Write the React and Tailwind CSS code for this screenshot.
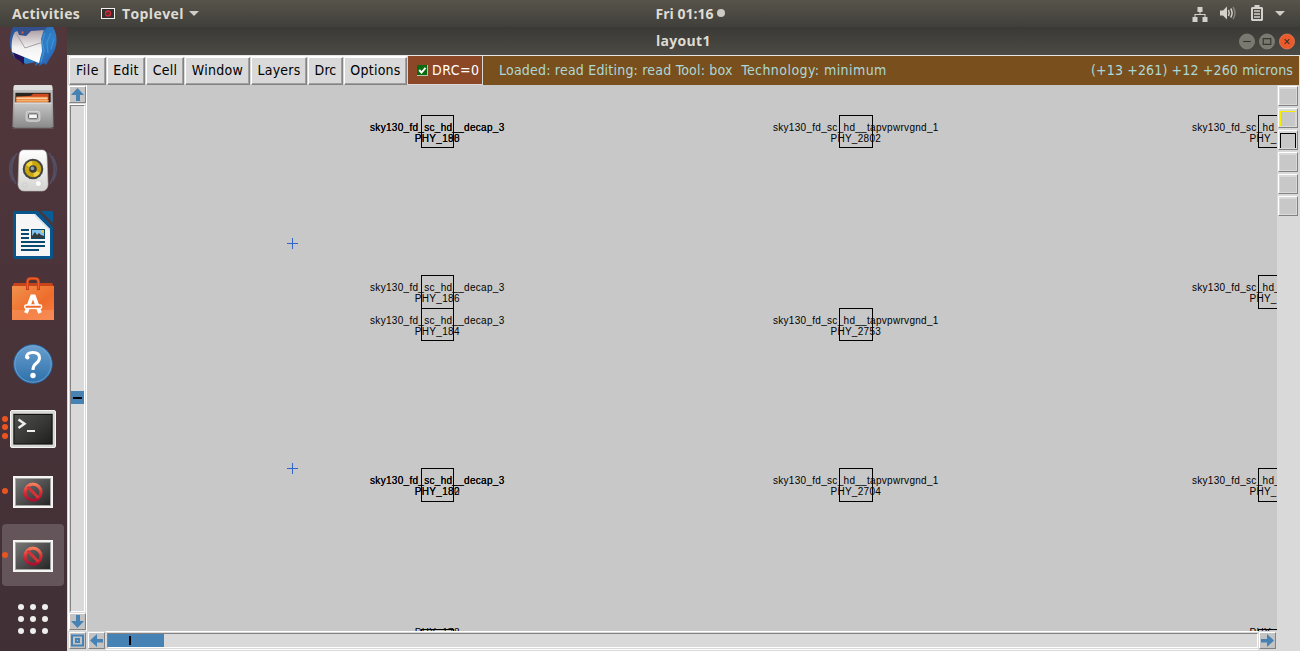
import React from "react";

const ui = "font-['DejaVu_Sans_Condensed','DejaVu_Sans',sans-serif]";
const head = "font-['Open_Sans','Noto_Sans',sans-serif]";

function Stop() {
  return (
    <svg className="mt-[2px]" width="40" height="32" viewBox="0 0 40 32">
      <defs>
        <linearGradient id="scr" x1="0" y1="0" x2="1" y2="1">
          <stop offset="0" stopColor="#777" />
          <stop offset="1" stopColor="#262626" />
        </linearGradient>
        <linearGradient id="red" x1="0" y1="0" x2="0" y2="1">
          <stop offset="0" stopColor="#f47b5c" />
          <stop offset=".5" stopColor="#da3034" />
          <stop offset="1" stopColor="#a81030" />
        </linearGradient>
      </defs>
      <rect width="40" height="32" fill="#f4f4f3" />
      <rect x="2" y="2" width="36" height="28" fill="#a5a5a3" />
      <rect x="3" y="3" width="34" height="26" fill="url(#scr)" />
      <circle cx="20" cy="16.2" r="8" fill="none" stroke="url(#red)" strokeWidth="3.2" />
      <path d="M14.5 10.7 25.5 21.7" stroke="#d93236" strokeWidth="3" />
    </svg>
  );
}

function Thunderbird() {
  return (
    <svg width="48" height="40" viewBox="0 0 48 40">
      <defs>
        <linearGradient id="tb" x1="0" y1="0" x2="1" y2="1">
          <stop offset="0" stopColor="#284f91" />
          <stop offset=".6" stopColor="#2f80c9" />
          <stop offset="1" stopColor="#2458ab" />
        </linearGradient>
        <linearGradient id="env" x1="0" y1="0" x2="0" y2="1">
          <stop offset="0" stopColor="#a99aa0" />
          <stop offset=".55" stopColor="#f3f2f3" />
          <stop offset="1" stopColor="#fff" />
        </linearGradient>
      </defs>
      <path d="M4 0H44C50 10 48 23 41 31L37 38 35 36 30 39 31 36 26 39 27 35 17 37 11 33 6 31C0 24-1 10 4 0Z" fill="url(#tb)" />
      <path d="M4 25 15 30 15 38 11 34 6 31Z" fill="#24135b" />
      <path d="M6 5 14 2H35L32 12 33 24 30 36 3 25C2 17 3 9 6 5Z" fill="url(#env)" />
      <path d="M7 6 16 21 34 15" fill="none" stroke="#a5a0a2" strokeWidth="1" />
      <path d="M7 0 10 8 17 9 22 4 36 3 38 0Z" fill="#34508b" />
      <circle cx="13.500" cy="5.500" r="1.200" fill="#cb5448" />
      <path d="M36 6 33 15 35 24 32 35M42 6 38 15 39 26M45 12 42 22" fill="none" stroke="#3f93cf" strokeWidth="1.200" />
    </svg>
  );
}

function Files() {
  return (
    <svg width="44" height="44" viewBox="0 0 44 45">
      <defs>
        <linearGradient id="cab" x1="0" y1="0" x2="0" y2="1">
          <stop offset="0" stopColor="#c7c7c7" />
          <stop offset="1" stopColor="#898989" />
        </linearGradient>
      </defs>
      <path d="M2 2Q2 0 5 0H39Q42 0 42 2L43 43H1Z" fill="url(#cab)" />
      <path d="M3 0H41L42 5H2Z" fill="#dedede" />
      <rect x="4" y="8" width="36" height="12" fill="#29241f" />
      <path d="M5 12 20 11 22 9H38V18H5Z" fill="#cf4a1e" />
      <path d="M5 12H37V18H5Z" fill="#ed8941" />
      <path d="M5 13.5H37" stroke="#fff2da" />
      <path d="M5 16H38" stroke="#f3b876" />
      <rect x="3" y="18" width="38" height="26" fill="url(#cab)" />
      <path d="M3 18.5H41" stroke="#e3e3e3" />
      <path d="M1 44H43" stroke="#716a6c" />
      <rect x="15" y="27" width="14" height="10" rx="2" fill="#bcbcbc" stroke="#d8d8d8" />
      <rect x="17.5" y="29.5" width="9" height="5" rx="1" fill="#f5f5f5" stroke="#555" />
    </svg>
  );
}

function Speaker() {
  return (
    <svg width="50" height="44" viewBox="0 0 50 44">
      <g fill="none" stroke="#5b6488" strokeWidth="1.8" opacity=".5">
        <path d="M9 4Q-1 19 8 35M6 7Q-2 19 5 32M41 4Q51 19 42 35M44 7Q52 19 45 32" />
      </g>
      <defs>
        <linearGradient id="spk" x1="0" y1="0" x2="0" y2="1">
          <stop offset="0" stopColor="#fff" />
          <stop offset="1" stopColor="#d3d3d0" />
        </linearGradient>
      </defs>
      <path d="M15 1H35Q39 2 39 8L40 36Q39 42 34 42H16Q11 42 10 36L11 8Q11 2 15 1Z" fill="url(#spk)" stroke="#bbb" strokeWidth=".6" />
      <circle cx="25" cy="20" r="10.3" fill="#454545" />
      <circle cx="25" cy="20" r="8.2" fill="#c9a60e" />
      <path d="M25 20 18 16A8 8 0 0 1 24 12ZM25 20 32 24A8 8 0 0 1 26 28Z" fill="#eed244" />
      <circle cx="25" cy="20" r="3.8" fill="#3c3d40" />
      <circle cx="24.4" cy="19.4" r="1.8" fill="#969eaa" />
      <circle cx="31" cy="35" r="3.4" fill="#d4d4d1" />
      <circle cx="30.4" cy="34.5" r="2.5" fill="#fafafa" />
      <rect x="15" y="34" width="4" height="4" rx="1" fill="none" stroke="#ccc" strokeWidth=".7" />
    </svg>
  );
}

function Writer() {
  return (
    <svg width="40" height="48" viewBox="0 0 40 48">
      <path d="M2 0H25L40 16V46Q40 48 38 48H2Q0 48 0 46V2Q0 0 2 0Z" fill="#08558c" />
      <path d="M28 0H39Q40 0 40 1V12Z" fill="#0a5c94" />
      <path d="M3 3H22L37 18V45H3Z" fill="#f6f6f6" />
      <path d="M22 3 37 18V20L21 4Z" fill="#cde" />
      <path d="M8 19H16M8 23H16M8 27H16M8 31H32M8 35H32M8 39H26" stroke="#08496f" strokeWidth="2" />
      <rect x="18" y="18" width="14" height="10" fill="#08496f" />
      <rect x="19" y="19" width="12" height="8" fill="#83c2ee" />
      <path d="M19 27V25L22 21 24 24 26 22 28 24 31 25V27Z" fill="#343b3e" />
      <circle cx="29.5" cy="20.5" r="1.4" fill="#e8cd4d" />
    </svg>
  );
}

function Software() {
  return (
    <svg className="-mt-px" width="42" height="43" viewBox="0 0 42 43">
      <defs>
        <linearGradient id="bag" x1="0" y1="0" x2="1" y2="1">
          <stop offset="0" stopColor="#f0914d" />
          <stop offset=".6" stopColor="#ef6c2b" />
          <stop offset="1" stopColor="#f58248" />
        </linearGradient>
      </defs>
      <path d="M2 6H40L42 10H0Z" fill="#c7441a" />
      <rect y="9" width="42" height="34" fill="url(#bag)" />
      <rect y="33" width="42" height="10" fill="#f9935d" opacity=".6" />
      <path d="M15.500 13V5Q15.500 1.500 19 1.500H23Q26.500 1.500 26.500 5V13" fill="none" stroke="#c53b14" strokeWidth="3" />
      <path d="M15.500 12V5Q15.500 1.500 19 1.500H23Q26.500 1.500 26.500 5V12" fill="none" stroke="#e8622d" strokeWidth="1.500" />
      <path d="M14 36 20 19.500H22L28 36" fill="none" stroke="#fff" strokeWidth="3.800" />
      <rect x="12.700" y="28" width="17" height="3.400" rx="1.700" fill="#ee6a2a" stroke="#fff" strokeWidth="1.500" />
    </svg>
  );
}

function Help() {
  return (
    <svg className="mt-[2px]" width="42" height="42" viewBox="0 0 42 42">
      <defs>
        <linearGradient id="hp" x1="0" y1="0" x2="0" y2="1">
          <stop offset="0" stopColor="#699fcf" />
          <stop offset="1" stopColor="#2d70aa" />
        </linearGradient>
      </defs>
      <circle cx="21" cy="21" r="19.300" fill="url(#hp)" stroke="#2861a0" strokeWidth="1" />
      <circle cx="21" cy="21" r="18.200" fill="none" stroke="#74a8d4" strokeWidth=".8" />
      <path d="M14.500 15Q14 9.500 21 9.500Q27.500 9.500 27.500 15Q27.500 18 24 20.500Q21 22.700 21 27" fill="none" stroke="#fff" strokeWidth="3" />
      <circle cx="15.500" cy="14.500" r="2" fill="#fff" />
      <circle cx="21" cy="32.500" r="2.700" fill="#fff" />
    </svg>
  );
}

function Terminal() {
  return (
    <svg className="mt-[4px]" width="46" height="38" viewBox="0 0 46 38">
      <defs>
        <linearGradient id="tm" x1="0" y1="0" x2="1" y2="1">
          <stop offset="0" stopColor="#4f4f4d" />
          <stop offset=".6" stopColor="#343433" />
          <stop offset="1" stopColor="#1d1d1d" />
        </linearGradient>
      </defs>
      <rect x=".5" y=".5" width="45" height="37" rx="1.500" fill="#d7d7d5" stroke="#f3f3f2" />
      <rect x="3" y="3.500" width="40" height="31" fill="#8c8c8a" />
      <rect x="4" y="4.500" width="38" height="29.500" fill="url(#tm)" stroke="#111" />
      <path d="M8.500 9.500 14.500 13.700 8.500 18" fill="none" stroke="#eee" strokeWidth="2.400" />
      <path d="M17 21H25" stroke="#eee" strokeWidth="2" />
    </svg>
  );
}

function Grid() {
  return (
    <svg width="32" height="32" viewBox="0 0 32 32" fill="#eeeeec">
      {[4, 16, 28].map((y) => [4, 16, 28].map((x) => <circle key={x + "-" + y} cx={x} cy={y} r="3" />))}
    </svg>
  );
}

function Slot({ children, dots = 0, active, className }) {
  return (
    <div className={`relative flex h-[62px] w-[62px] shrink-0 items-center justify-center rounded-[4px] ${active ? "bg-[#64555b]" : ""} ${className || ""}`}>
      {children}
      {dots > 0 && (
        <div className="absolute top-0 left-0 flex h-full w-[6px] flex-col items-center justify-center gap-[2.500px]">
          {Array.from({ length: dots }, (_, i) => (
            <i key={i} className="block size-[6px] rounded-full bg-[#e95420]" />
          ))}
        </div>
      )}
    </div>
  );
}

function Dock() {
  return (
    <div className="flex h-[624px] w-[67px] shrink-0 flex-col items-start overflow-hidden bg-linear-to-b from-[#51373c] to-[#403036] pl-[2px]">
      <div className="flex h-[49px] w-[62px] shrink-0 justify-center">
        <Thunderbird />
      </div>
      <Slot><Files /></Slot>
      <Slot className="mt-[2px]"><Speaker /></Slot>
      <Slot className="mt-[2px]"><Writer /></Slot>
      <Slot className="mt-[2px]"><Software /></Slot>
      <Slot className="mt-[2px]"><Help /></Slot>
      <Slot className="mt-[2px]" dots={3}><Terminal /></Slot>
      <Slot className="mt-[2px]" dots={1}><Stop /></Slot>
      <Slot className="mt-[2px]" dots={1} active><Stop /></Slot>
      <Slot className="mt-[2px]"><Grid /></Slot>
    </div>
  );
}

function TopBar() {
  return (
    <div className={`grid h-[27px] grid-cols-[1fr_auto_1fr] items-center bg-linear-to-b from-[#57544b] to-[#403f3a] text-[14px] font-bold text-[#dfdbd2] ${head}`}>
      <div className="flex items-center pl-[12px]">
        <span className="w-[89px] tracking-[0.3px]">Activities</span>
        <svg width="14" height="11" viewBox="0 0 14 11">
          <rect x=".5" y=".5" width="13" height="10" fill="#33302f" stroke="#f1f1ef" />
          <circle cx="7" cy="5.500" r="2.500" fill="none" stroke="#d62c3a" strokeWidth="1.300" />
          <path d="M5.300 3.800 8.700 7.200" stroke="#d62c3a" />
        </svg>
        <span className="ml-[7px] w-[67px] tracking-[0.4px]">Toplevel</span>
        <svg width="10" height="5"><path d="M0 0H10L5 5Z" fill="#d0cdc6" /></svg>
      </div>
      <div className="flex items-center gap-[3px] pl-[80px]">
        <span className="-mt-px w-[58px] whitespace-nowrap">Fri 01:16</span>
        <i className="-mt-px block size-[8px] rounded-full bg-[#cccac5]" />
      </div>
      <div className="flex items-center justify-end pr-[15px] text-[#d3d1cc]">
        <svg width="16" height="16" viewBox="0 0 16 16" fill="#d3d1cc">
          <path d="M5.500 1H10.500V6H8.500V8H13.500V11H15.500V16H10.500V11H12.500V9H3.500V11H5.500V16H.5V11H2.500V8H7.500V6H5.500Z" />
        </svg>
        <svg className="-mt-px ml-[12px]" width="17" height="14" viewBox="0 0 17 14">
          <path d="M0 4.500H3L7 .5V13.500L3 9.500H0Z" fill="#d3d1cc" />
          <path d="M8.500 4Q10 7 8.500 10M10.700 2.500Q13.500 7 10.700 11.500" fill="none" stroke="#d3d1cc" strokeWidth="1.500" />
          <path d="M13 1Q17 7 13 13" fill="none" stroke="#85827c" strokeWidth="1.500" />
        </svg>
        <svg className="-mt-px ml-[14px]" width="12" height="16" viewBox="0 0 12 16">
          <path d="M3.500 0H8.500V2H11L12 3V15L11 16H1L0 15V3L1 2H3.500ZM2 4V14H10V4Z" fill="#d3d1cc" fillRule="evenodd" />
          <path d="M3 6H9M3 9H9M3 12H9" stroke="#d3d1cc" strokeWidth="1.700" />
        </svg>
        <svg className="ml-[12px]" width="10" height="5"><path d="M0 0H10L5 5Z" fill="#d0cdc6" /></svg>
      </div>
    </div>
  );
}

function TitleBar() {
  return (
    <div className={`grid h-[28px] shrink-0 grid-cols-[1fr_auto_1fr] items-center bg-linear-to-b from-[#3a3935] to-[#4b4a44] text-[14px] font-bold text-[#dfdbd2] ${head}`}>
      <span />
      <span className="-mt-[2px] w-[55px] whitespace-nowrap tracking-[0.3px]">layout1</span>
      <div className="flex justify-end gap-[4px] pr-[5px]">
        {["M4.500 8.500H12.500", "M4.500 5.500H12.500V11.500H4.500Z", "M6 6 11 11M11 6 6 11"].map((d, i) => (
          <svg key={d} width="16" height="17" viewBox="0 0 17 17">
            <circle cx="8.500" cy="8.500" r="8" fill={i === 2 ? "#ec5a2c" : "#797871"} stroke={i === 2 ? "#f08461" : "#8b8982"} strokeWidth=".7" />
            <path d={d} fill="none" stroke="#39352f" strokeWidth="1.200" />
          </svg>
        ))}
      </div>
    </div>
  );
}

const menus = [
  ["File", "w-[37px] tracking-[0.5px]"],
  ["Edit", "w-[38px] tracking-[0.3px]"],
  ["Cell", "w-[38px] tracking-[0.3px]"],
  ["Window", "w-[65px] tracking-[0.3px]"],
  ["Layers", "w-[56px] tracking-[0.2px]"],
  ["Drc", "w-[35px] tracking-[0.1px]"],
  ["Options", "w-[63px] tracking-[0.25px]"],
];

function MenuBar() {
  return (
    <div className={`flex h-[30px] shrink-0 border-t border-[#e6e6e6] bg-[#d9d9d9] pl-[2px] text-[14px] text-black ${ui}`}>
      <div className="flex gap-px border-t border-white">
        {menus.map(([t, w]) => (
          <div key={t} className={`flex items-center justify-center border border-t-white border-r-[#828282] border-b-[#828282] border-l-white pb-[2px] shadow-[inset_-1px_-1px_#a0a0a0] ${w}`}>
            {t}
          </div>
        ))}
      </div>
      <div className="ml-px flex w-[75px] items-center gap-[4px] border-r border-b border-[#d9d9d9] bg-[#8b4726] pl-[9px] text-white">
        <svg className="shrink-0" width="11" height="11" viewBox="0 0 11 11">
          <rect width="11" height="11" fill="#b0c8a8" />
          <path d="M0 0H10V10H0Z" fill="#0a6c10" />
          <path d="M2.200 5 4.500 7.500 8.500 2.800" fill="none" stroke="#fff" strokeWidth="1.900" />
        </svg>
        <span className="tracking-[0.5px] whitespace-nowrap">DRC=0</span>
      </div>
      <div className="mr-px flex flex-1 items-center justify-between bg-[#79501d] pr-[6px] pl-[16px] whitespace-pre text-[#add8d8]">
        <span className="tracking-[0.21px]">
          {"Loaded: read Editing: read Tool: box  "}
          <span className="tracking-[0.44px]">Technology: minimum</span>
        </span>
        <span className="tracking-[0.15px]">(+13 +261) +12 +260 microns</span>
      </div>
    </div>
  );
}

const arrows = {
  up: "M6.500 0 13 7H9V13H5V7H0Z",
  down: "M5 0H9V6H13L6.500 13 0 6H5Z",
  left: "M0 6.500 7 0V5H13V8.500H7V13Z",
  right: "M13 6.500 6 0V5H0V8.500H6V13Z",
};

function ArrowButton({ dir }) {
  return (
    <div className="flex size-[17px] shrink-0 items-center justify-center border border-t-white border-r-[#828282] border-b-[#828282] border-l-white bg-[#c3c3c3]">
      <svg width="13" height="13" viewBox="0 0 13 13">
        {dir ? (
          <path d={arrows[dir]} fill="#4682b4" />
        ) : (
          <path d="M1 1.500H12V11.500H1ZM5 5H8V8H5Z" fill="none" stroke="#4682b4" strokeWidth="2" />
        )}
      </svg>
    </div>
  );
}

const cells = [
  { k: "decap", y: 115, name: ["PHY_188", "PHY_190"], twice: true },
  { k: "tap", y: 115, name: ["PHY_2802"] },
  { k: "edge", y: 115, name: ["PHY_2803"] },
  { k: "decap", y: 275, name: ["PHY_186"] },
  { k: "decap", y: 308, name: ["PHY_184"] },
  { k: "tap", y: 308, name: ["PHY_2753"] },
  { k: "edge", y: 275, name: ["PHY_2778"] },
  { k: "decap", y: 468, name: ["PHY_182", "PHY_180"], twice: true },
  { k: "tap", y: 468, name: ["PHY_2704"] },
  { k: "edge", y: 468, name: ["PHY_2705"] },
  { k: "decap", y: 629, name: ["PHY_178"], low: true },
  { k: "edge", y: 629, name: ["PHY_2680"], low: true },
];

const kinds = {
  decap: { x: 421, w: 33, c: 437.3, label: "sky130_fd_sc_hd__decap_3" },
  tap: { x: 839, w: 34, c: 855.8, label: "sky130_fd_sc_hd__tapvpwrvgnd_1" },
  edge: { x: 1258, w: 34, c: 1274.8, label: "sky130_fd_sc_hd__tapvpwrvgnd_1" },
};

function Cell({ k, y, name, twice, low }) {
  const g = kinds[k];
  const top = y - 85;
  const t = "absolute -translate-x-1/2 whitespace-nowrap leading-[12px]";
  return (
    <>
      <div className="absolute border border-black" style={{ left: g.x - 87, top, width: g.w, height: y === 275 || y === 468 ? 34 : 33 }} />
      {!low && (twice ? [0, 1] : [0]).map((i) => (
        <span key={i} className={t} style={{ left: g.c - 87, top: top + 7 }}>{g.label}</span>
      ))}
      {name.map((n) => (
        <span key={n} className={t} style={{ left: g.c - 87, top: low ? top - 2 : top + 18 }}>{n}</span>
      ))}
    </>
  );
}

function Canvas() {
  return (
    <div className="relative flex-1 overflow-hidden bg-[#c8c8c8] font-['Liberation_Sans',Arial,sans-serif] text-[10px] tracking-[0.3px] text-black">
      {cells.map((c) => <Cell key={c.k + c.y} {...c} />)}
      {[243, 468].map((y) => (
        <svg key={y} className="absolute" width="11" height="11" style={{ left: 200, top: y - 90 }}>
          <path d="M0 5H11V6H0ZM5 0H6V11H5Z" fill="#3064c8" />
        </svg>
      ))}
    </div>
  );
}

function VScroll() {
  return (
    <div className="flex w-[20px] shrink-0 flex-col border-r border-l border-r-white border-l-[#d9d9d9] bg-[#d9d9d9]">
      <div className="flex flex-1 flex-col border-l border-white pt-px">
        <ArrowButton dir="up" />
        <div className="mt-px mr-px flex h-[508px] flex-col border-t border-white pl-px">
          <div className="flex h-[507px] w-[15px] flex-col border border-t-[#828282] border-r-white border-b-white border-l-[#828282]">
            <div className="mt-[285px] flex h-[13px] items-center justify-center bg-[#4682b4]">
              <i className="block h-[2px] w-[9px] bg-black" />
            </div>
          </div>
        </div>
        <div className="mt-px flex"><ArrowButton dir="down" /></div>
      </div>
    </div>
  );
}

function HScroll() {
  return (
    <div className="flex h-[20px] shrink-0 bg-[#d9d9d9] pt-px pl-[2px]">
      <ArrowButton />
      <div className="ml-[2px] flex"><ArrowButton dir="left" /></div>
      <div className="-mt-px ml-px flex h-[19px] w-[1152px] flex-col border-t border-b border-white pt-px pl-px">
        <div className="flex h-[15px] border border-t-[#828282] border-r-white border-b-white border-l-[#828282]">
          <div className="flex h-[13px] w-[56px] items-center bg-[#4682b4] pl-[21px]">
            <i className="block h-[9px] w-[2px] bg-black" />
          </div>
        </div>
      </div>
      <div className="ml-px flex"><ArrowButton dir="right" /></div>
    </div>
  );
}

function Palette() {
  return (
    <div className="flex w-[23px] shrink-0 flex-col gap-[2px] bg-[#d9d9d9] pt-px pl-px">
      {["border-[#c8c8c8]", "border-[#f4f000]", "border-black", "border-[#c8c8c8]", "border-[#c8c8c8]", "border-[#c8c8c8]"].map((c, i) => (
        <div key={i} className="h-[20px] w-[20px] border border-t-white border-r-[#828282] border-b-[#828282] border-l-white bg-[#d9d9d9] px-px pt-[2px]">
          <div className={`h-[15px] w-[16px] border border-b-0 bg-[#c8c8c8] ${c}`} />
        </div>
      ))}
    </div>
  );
}

export default function App() {
  return (
    <div className="flex h-[651px] w-[1300px] flex-col overflow-hidden">
      <TopBar />
      <div className="flex flex-1">
        <Dock />
        <div className="flex flex-1 flex-col">
          <TitleBar />
          <MenuBar />
          <div className="flex flex-1">
            <div className="flex flex-1 flex-col">
              <div className="flex h-[546px]">
                <VScroll />
                <Canvas />
              </div>
              <HScroll />
            </div>
            <Palette />
          </div>
        </div>
      </div>
    </div>
  );
}
